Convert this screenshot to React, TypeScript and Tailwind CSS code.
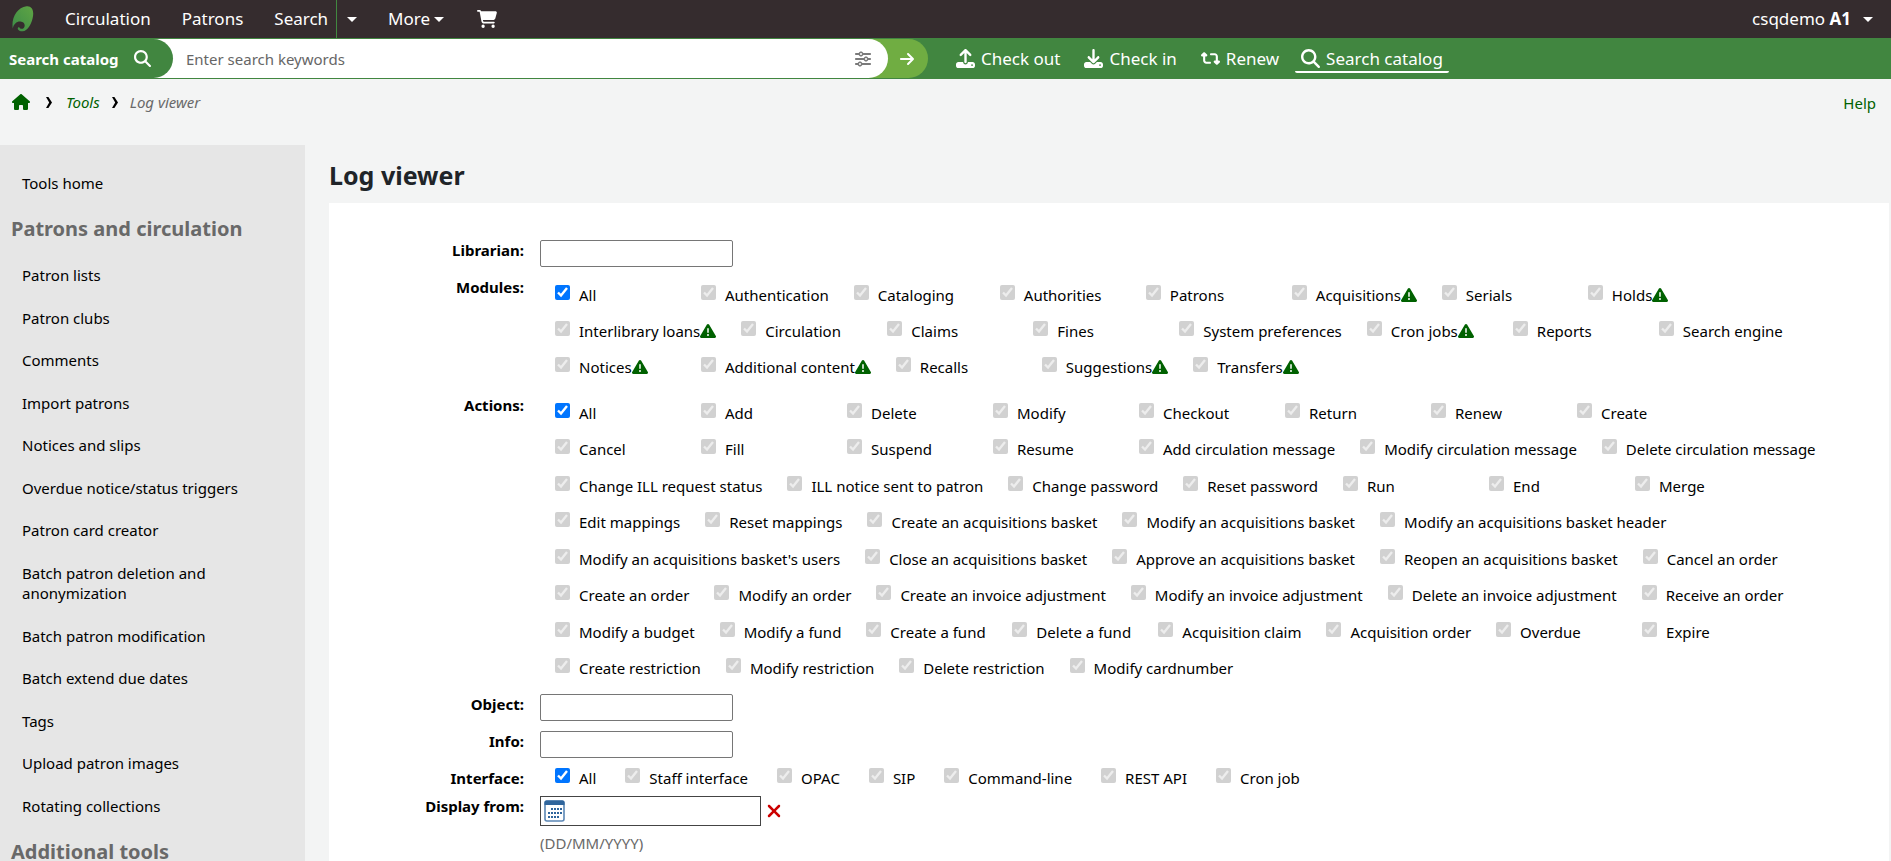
import { useState } from 'react';
import { FaArrowRight, FaCartShopping, FaDownload, FaHouse, FaMagnifyingGlass, FaRetweet, FaSliders, FaTriangleExclamation, FaUpload, FaXmark } from 'react-icons/fa6';

interface Option {
  name: string;
  warning?: boolean;
}

const modules: Option[] = [
  { name: 'All' },
  { name: 'Authentication' },
  { name: 'Cataloging' },
  { name: 'Authorities' },
  { name: 'Patrons' },
  { name: 'Acquisitions', warning: true },
  { name: 'Serials' },
  { name: 'Holds', warning: true },
  { name: 'Interlibrary loans', warning: true },
  { name: 'Circulation' },
  { name: 'Claims' },
  { name: 'Fines' },
  { name: 'System preferences' },
  { name: 'Cron jobs', warning: true },
  { name: 'Reports' },
  { name: 'Search engine' },
  { name: 'Notices', warning: true },
  { name: 'Additional content', warning: true },
  { name: 'Recalls' },
  { name: 'Suggestions', warning: true },
  { name: 'Transfers', warning: true },
];

const actions: Option[] = [
  'All', 'Add', 'Delete', 'Modify', 'Checkout', 'Return', 'Renew', 'Create',
  'Cancel', 'Fill', 'Suspend', 'Resume', 'Add circulation message', 'Modify circulation message', 'Delete circulation message',
  'Change ILL request status', 'ILL notice sent to patron', 'Change password', 'Reset password', 'Run', 'End', 'Merge',
  'Edit mappings', 'Reset mappings', 'Create an acquisitions basket', 'Modify an acquisitions basket', 'Modify an acquisitions basket header',
  "Modify an acquisitions basket's users", 'Close an acquisitions basket', 'Approve an acquisitions basket', 'Reopen an acquisitions basket', 'Cancel an order',
  'Create an order', 'Modify an order', 'Create an invoice adjustment', 'Modify an invoice adjustment', 'Delete an invoice adjustment', 'Receive an order',
  'Modify a budget', 'Modify a fund', 'Create a fund', 'Delete a fund', 'Acquisition claim', 'Acquisition order', 'Overdue', 'Expire',
  'Create restriction', 'Modify restriction', 'Delete restriction', 'Modify cardnumber',
].map((name) => ({ name }));

const interfaces: Option[] = ['All', 'Staff interface', 'OPAC', 'SIP', 'Command-line', 'REST API', 'Cron job'].map((name) => ({ name }));

const patronTools = [
  'Patron lists',
  'Patron clubs',
  'Comments',
  'Import patrons',
  'Notices and slips',
  'Overdue notice/status triggers',
  'Patron card creator',
  'Batch patron deletion and anonymization',
  'Batch patron modification',
  'Batch extend due dates',
  'Tags',
  'Upload patron images',
  'Rotating collections',
];

function Caret() {
  return (
    <svg viewBox="0 0 10 5" className="w-[10px] h-[5px] shrink-0" fill="currentColor" aria-hidden="true">
      <path d="M0 0h10L5 5z" />
    </svg>
  );
}

function Chevron() {
  return (
    <svg viewBox="0 0 6 11" className="w-[6px] h-[11px] text-black" fill="currentColor" aria-hidden="true">
      <path d="M0 0h2.4L6 5.5 2.4 11H0l3.2-5.5z" />
    </svg>
  );
}

function Logo() {
  return (
    <svg viewBox="0 0 22 26" className="w-[22px] h-[26px]" aria-hidden="true">
      <defs>
        <linearGradient id="leaf" x1="1" y1="0" x2="0" y2="1">
          <stop offset="0" stopColor="#5fa544" />
          <stop offset="1" stopColor="#3c8b48" />
        </linearGradient>
      </defs>
      <path
        fill="url(#leaf)"
        d="M14.500.2C19.500-.4 22 3.800 21 10.200 19.900 17.300 16 25 10.500 25.300c-2.200.1-4-.9-4.700-2.400-.2-.9.500-1.700 1.600-1.500.5 1.500 3 2 4.400.5 1.900-2 .8-6.200-3.300-6.400C4.500 15.300 1.600 18 .8 22.600-1 12 5 1.400 14.500.2z"
      />
    </svg>
  );
}

function CalendarIcon() {
  return (
    <svg viewBox="0 0 21 22" className="w-[21px] h-[22px]" aria-hidden="true">
      <rect x="1" y="1" width="19" height="20" rx="2" fill="#fff" stroke="#5b87b5" strokeWidth="1.6" />
      <path d="M.5 5V2.500A2 2 0 0 1 2.500.5h16a2 2 0 0 1 2 2V5z" fill="#2f659c" />
      <g fill="#2f659c">
        {[8, 12, 16].map((y, row) =>
          [4, 7, 10, 13, 16].map((x, col) =>
            (row === 0 && col === 0) || (row === 2 && col === 4) ? null : <rect key={`${x}-${y}`} x={x} y={y} width="2" height="2" />
          )
        )}
      </g>
    </svg>
  );
}

interface CheckboxGroupProps {
  group: string;
  options: Option[];
  compact?: boolean;
}

function CheckboxGroup({ group, options, compact }: CheckboxGroupProps) {
  const [allChecked, setAllChecked] = useState(true);

  return (
    <div className="flex-1 flex flex-wrap content-between pl-[15px]">
      {options.map((option) => {
        const isAll = option.name === 'All';
        return (
          <label
            key={option.name}
            className={`flex items-center whitespace-nowrap ${compact ? 'h-[28px] pr-[29px]' : 'h-[36px] min-w-[146px] pr-[25px]'}`}
          >
            <input
              type="checkbox"
              name={group}
              checked={isAll ? allChecked : true}
              disabled={!isAll && allChecked}
              onChange={() => isAll && setAllChecked(!allChecked)}
              className="w-[15px] h-[15px] mr-[9px] mb-[5px] shrink-0"
            />
            {option.name}
            {option.warning && <FaTriangleExclamation className="w-4 h-4 text-[#006100]" />}
          </label>
        );
      })}
    </div>
  );
}

function FieldLabel({ htmlFor, children }: { htmlFor?: string; children: string }) {
  return (
    <label htmlFor={htmlFor} className="w-[171px] mr-4 shrink-0 text-right font-bold leading-5">
      {children}
    </label>
  );
}

function TextField({ id, label }: { id: string; label: string }) {
  return (
    <div className="flex mb-[10px]">
      <FieldLabel htmlFor={id}>{label}</FieldLabel>
      <input id={id} type="text" className="w-[193px] h-[27px] px-1 bg-white border border-[#767676] rounded-[2px]" />
    </div>
  );
}

export default function App() {
  return (
    <div className="h-screen overflow-hidden bg-[#f3f4f4] font-['Noto_Sans','Open_Sans',sans-serif] text-[15px] leading-5 text-black">
      <nav className="flex items-center h-[38px] bg-[#352c2e] text-white text-[17px]">
        <a href="#" className="ml-3" aria-label="Home">
          <Logo />
        </a>
        <a href="#" className="ml-[31px]">Circulation</a>
        <a href="#" className="ml-[31px]">Patrons</a>
        <a href="#" className="ml-[31px]">Search</a>
        <button className="self-stretch ml-2 pl-[10px] border-l border-[#418940]" aria-label="Search options">
          <Caret />
        </button>
        <button className="flex items-center gap-1 ml-[31px]">
          More <Caret />
        </button>
        <a href="#" className="ml-[33px]" aria-label="Cart">
          <FaCartShopping className="w-5 h-5" />
        </a>
        <button className="flex items-center ml-auto mr-[18px]">
          csqdemo&nbsp;<b>A1</b>
          <span className="ml-3"><Caret /></span>
        </button>
      </nav>

      <div className="flex items-center h-[41px] bg-[#418640] text-white">
        <form className="flex w-[928px] h-[39px]">
          <div className="flex flex-1 bg-white rounded-r-[20px] z-10">
            <label htmlFor="search" className="flex items-center gap-[15px] w-[173px] pl-[9px] bg-[#418640] rounded-r-[20px] font-bold">
              Search catalog <FaMagnifyingGlass className="w-[17px] h-[17px]" />
            </label>
            <input
              id="search"
              type="text"
              placeholder="Enter search keywords"
              className="flex-1 px-[13px] text-black placeholder-[#666] outline-none"
            />
            <button type="button" className="mr-[17px] text-[#7a7a7a]" aria-label="Advanced search">
              <FaSliders className="w-4 h-4" />
            </button>
          </div>
          <button type="submit" className="flex items-center justify-end w-[60px] -ml-5 pr-[13px] bg-[#70ad42] rounded-r-[20px]" aria-label="Submit">
            <FaArrowRight className="w-4 h-4" />
          </button>
        </form>
        <div className="flex items-center ml-[28px] text-[17px]">
          <a href="#" className="flex items-center gap-[6px]"><FaUpload className="w-[19px] h-[19px]" /> Check out</a>
          <a href="#" className="flex items-center gap-[6px] ml-6"><FaDownload className="w-[19px] h-[19px]" /> Check in</a>
          <a href="#" className="flex items-center gap-[6px] ml-6"><FaRetweet className="w-[19px] h-[19px]" /> Renew</a>
          <a href="#" className="flex items-center gap-[6px] ml-4 pt-[2px] px-[6px] leading-6 border-b-2 border-white rounded-[2px]">
            <FaMagnifyingGlass className="w-[19px] h-[19px]" /> Search catalog
          </a>
        </div>
      </div>

      <div className="flex items-center justify-between h-[66px] pb-[18px] pl-3 pr-[15px]">
        <nav className="flex items-center mb-[2px] italic text-[#006100]">
          <a href="#" aria-label="Home"><FaHouse className="w-[18px] h-4" /></a>
          <span className="ml-4 mr-[14px]"><Chevron /></span>
          <a href="#">Tools</a>
          <span className="mx-3"><Chevron /></span>
          <a href="#" className="text-[#696969]">Log viewer</a>
        </nav>
        <a href="#" className="text-[#006100]">Help</a>
      </div>

      <div className="flex items-start">
        <aside className="w-[305px] shrink-0 pt-[28px] bg-[#e6e6e6]">
          <a href="#" className="block px-[22px]">Tools home</a>
          <h2 className="px-[11px] my-[26px] text-[20px] leading-5 font-bold text-[#696969]">Patrons and circulation</h2>
          <ul className="flex flex-col justify-between min-h-[551px]">
            {patronTools.map((tool) => (
              <li key={tool} className="pl-[22px] pr-[60px]">
                <a href="#" className="block leading-5">{tool}</a>
              </li>
            ))}
          </ul>
          <h2 className="px-[11px] my-[26px] text-[20px] leading-5 font-bold text-[#696969]">Additional tools</h2>
        </aside>

        <main className="flex-1 ml-6 mr-[2px]">
          <h1 className="h-[58px] pt-4 text-[25px] leading-7 font-bold text-[#202428]">Log viewer</h1>
          <form className="pt-[37px] pb-10 pl-6 pr-6 bg-white">
            <TextField id="librarian" label="Librarian:" />
            <div className="flex mb-[10px]">
              <FieldLabel>Modules:</FieldLabel>
              <CheckboxGroup group="modules" options={modules} />
            </div>
            <div className="flex min-h-[291px] mb-2">
              <FieldLabel>Actions:</FieldLabel>
              <CheckboxGroup group="actions" options={actions} />
            </div>
            <TextField id="object" label="Object:" />
            <TextField id="info" label="Info:" />
            <div className="flex items-center -mt-1 mb-1">
              <FieldLabel>Interface:</FieldLabel>
              <CheckboxGroup group="interfaces" options={interfaces} compact />
            </div>
            <div className="flex">
              <FieldLabel htmlFor="from">Display from:</FieldLabel>
              <div>
                <div className="flex items-center gap-[3px]">
                  <div className="flex items-center w-[221px] h-[30px] pl-[3px] bg-white border border-[#444]">
                    <CalendarIcon />
                    <input id="from" type="text" className="flex-1 min-w-0 px-1 outline-none" />
                  </div>
                  <button type="button" className="text-[#cc0000]" aria-label="Clear date">
                    <FaXmark className="w-5 h-5" />
                  </button>
                </div>
                <p className="mt-[7px] text-[#696969]">(DD/MM/YYYY)</p>
              </div>
            </div>
          </form>
        </main>
      </div>
    </div>
  );
}
